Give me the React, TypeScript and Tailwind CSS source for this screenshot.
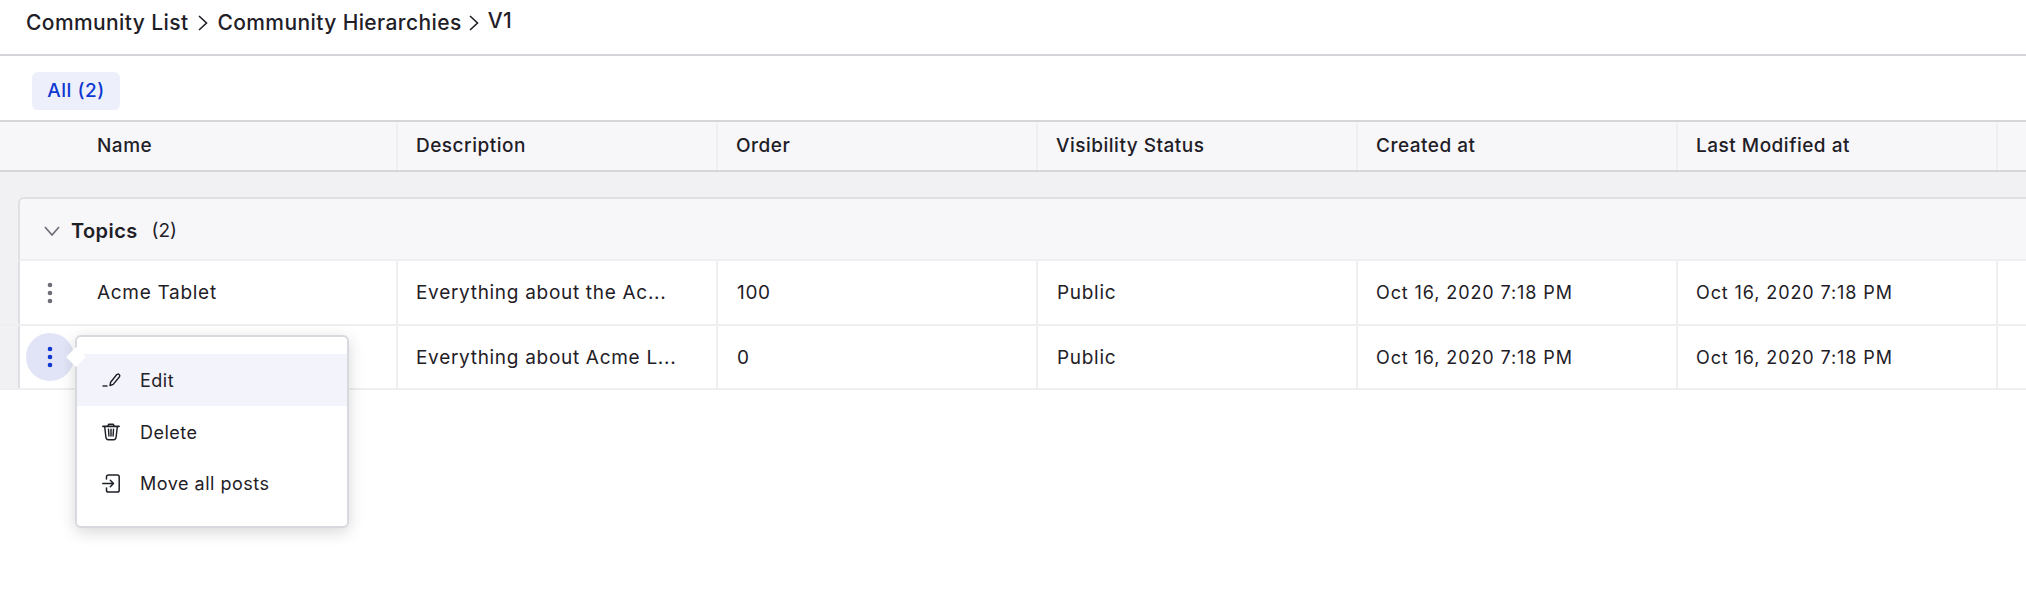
const font = "font-['Inter',sans-serif]";

const columns = ["Description", "Order", "Visibility Status", "Created at", "Last Modified at"];

const rows = [
  { name: "Acme Tablet", description: "Everything about the Ac...", order: "100", height: "h-[65px]" },
  { name: "Acme Laptop", description: "Everything about Acme L...", order: "0", height: "h-[64px]" },
];

const DotsIcon = ({ active }: { active?: boolean }) => (
  <svg width="8" height="24" viewBox="0 0 8 24" className={active ? "fill-[#0f37d1]" : "fill-[#6d6e78]"}>
    <circle cx="4" cy="4" r="2.3" />
    <circle cx="4" cy="12" r="2.3" />
    <circle cx="4" cy="20" r="2.3" />
  </svg>
);

const EditIcon = () => (
  <svg width="20" height="20" viewBox="0 0 20 20" fill="none" stroke="#1f2027" strokeWidth="1.4" strokeLinejoin="round">
    <path d="M0.5 16H5.5" />
    <path d="M8 15.5L8.6 12.2L14.6 4.8C15.3 4 16.4 3.8 17.2 4.5C18 5.2 18 6.2 17.3 7L11.2 14.4Z" />
  </svg>
);

const TrashIcon = () => (
  <svg width="18" height="18" viewBox="0 0 20 20" fill="none" stroke="#1f2027" strokeWidth="1.6" strokeLinecap="round" strokeLinejoin="round">
    <path d="M1 3.8H19" strokeWidth="1.8" />
    <path d="M6.5 3.5L7.4 1.4H12.6L13.5 3.5" />
    <path d="M3 4L4.3 15.6C4.5 17.5 5.6 18.6 7 18.6H13C14.4 18.6 15.5 17.5 15.7 15.6L17 4" />
    <path d="M7.2 7L7.7 14.5M10 7V14.5M12.8 7L12.3 14.5" />
  </svg>
);

const MoveIcon = () => (
  <svg width="18" height="19" viewBox="0 0 18 19" fill="none" stroke="#1f2027" strokeWidth="1.5" strokeLinecap="round" strokeLinejoin="round">
    <path d="M4.5 5V2.8C4.5 1.7 5.3 0.9 6.4 0.9H15.3C16.4 0.9 17.2 1.7 17.2 2.8V16.2C17.2 17.3 16.4 18.1 15.3 18.1H6.4C5.3 18.1 4.5 17.3 4.5 16.2V14" />
    <path d="M0.8 9.5H11.5M8.3 6.3L11.5 9.5L8.3 12.7" />
  </svg>
);

const Chevron = ({ className }: { className: string }) => (
  <svg width="12" height="16" viewBox="0 0 12 16" fill="none" stroke="#1f2027" strokeWidth="1.6" className={className}>
    <path d="M2 1L9.5 8L2 15" />
  </svg>
);

const menuItems = [
  { label: "Edit", icon: <EditIcon />, active: true, height: "h-[52px]" },
  { label: "Delete", icon: <TrashIcon />, height: "h-[52px]" },
  { label: "Move all posts", icon: <MoveIcon />, height: "h-[50px]" },
];

const RowMenu = () => (
  <div className="absolute left-[75px] top-[335px] z-10 h-[193px] w-[274px] rounded-[6px] border-2 border-[#d8d9de] bg-white shadow-[0_4px_16px_rgba(0,0,0,0.16)]">
    <div className="absolute left-[-8px] top-[13px] size-[14px] rotate-45 bg-white" />
    <div className="pt-[17px]">
      {menuItems.map((item) => (
        <div key={item.label} className={`flex items-center pl-[25px] ${item.height} ${item.active ? "bg-[#f3f3fc]" : ""}`}>
          <span className="flex w-[39px] shrink-0">{item.icon}</span>
          <span className="-ml-px text-[18px] tracking-[0.5px] text-[#1f2027]">{item.label}</span>
        </div>
      ))}
    </div>
  </div>
);

const App = () => {
  return (
    <div className={`${font} relative h-[612px] w-[2026px] overflow-hidden bg-white text-[#1f2027]`}>
      <div className="flex h-[56px] items-center border-b-2 border-[#d5d6da] pb-[8px] pl-[26px] text-[21px] font-medium tracking-[0.4px]">
        <span>Community List</span>
        <Chevron className="ml-[9px] mr-[8px]" />
        <span>Community Hierarchies</span>
        <Chevron className="ml-[6px] mr-[8px]" />
        <span className="mb-[4px]">V1</span>
      </div>

      <div className="flex h-[64px] items-start pl-[32px] pt-[16px]">
        <div className="flex h-[38px] w-[88px] items-center justify-center rounded-[6px] bg-[#edf0fb] text-[19px] font-medium tracking-[0.5px] text-[#0f37d1]">
          All (2)
        </div>
      </div>

      <div className="flex h-[52px] border-y-2 border-[#d5d6da] bg-[#f7f7f9] text-[19px] font-medium tracking-[0.5px]">
        <div className="flex w-[398px] shrink-0 items-center border-r-2 border-[#eeeff1] pl-[97px] pt-px">Name</div>
        {columns.map((col) => (
          <div key={col} className="flex w-[320px] shrink-0 items-center border-r-2 border-[#eeeff1] pl-[18px] pt-px">
            {col}
          </div>
        ))}
      </div>

      <div className="bg-[#f1f1f3] pl-[18px] pt-[25px]">
        <div className="flex h-[64px] items-center rounded-tl-[6px] border-2 border-r-0 border-[#dfe0e3] border-b-[#eeeff1] bg-[#f7f7f9] pl-[24px] pt-[4px]">
          <svg width="16" height="10" viewBox="0 0 16 10" fill="none" stroke="#6d6e78" strokeWidth="1.7">
            <path d="M1 1L8 9L15 1" />
          </svg>
          <span className="ml-[11px] text-[20px] font-semibold tracking-[0.4px]">Topics</span>
          <span className="ml-[14px] text-[19px]">(2)</span>
        </div>
      </div>

      {rows.map((row, i) => (
        <div key={row.name} className={`flex ${row.height} border-b-2 border-[#eeeff1] text-[19px] tracking-[0.7px]`}>
          <div className="w-[20px] shrink-0 border-r-2 border-[#dfe0e3] bg-[#f1f1f3]" />
          <div className="flex w-[378px] shrink-0 items-center border-r-2 border-[#eeeff1]">
            <div className={`ml-[6px] flex size-[48px] shrink-0 items-center justify-center rounded-full ${i === 1 ? "bg-[#e0e4f6]" : ""}`}>
              <DotsIcon active={i === 1} />
            </div>
            <span className="ml-[23px] pt-[2px]">{row.name}</span>
          </div>
          <div className="flex w-[320px] shrink-0 items-center border-r-2 border-[#eeeff1] pl-[18px] pt-[2px]">{row.description}</div>
          <div className="flex w-[320px] shrink-0 items-center border-r-2 border-[#eeeff1] pl-[19px] pt-[2px]">{row.order}</div>
          <div className="flex w-[320px] shrink-0 items-center border-r-2 border-[#eeeff1] pl-[19px] pt-[2px]">Public</div>
          <div className="flex w-[320px] shrink-0 items-center border-r-2 border-[#eeeff1] pl-[18px] text-[18px] tracking-[0.9px]">Oct 16, 2020 7:18 PM</div>
          <div className="flex w-[320px] shrink-0 items-center border-r-2 border-[#eeeff1] pl-[18px] text-[18px] tracking-[0.9px]">Oct 16, 2020 7:18 PM</div>
        </div>
      ))}

      <RowMenu />
    </div>
  );
};

export default App;
